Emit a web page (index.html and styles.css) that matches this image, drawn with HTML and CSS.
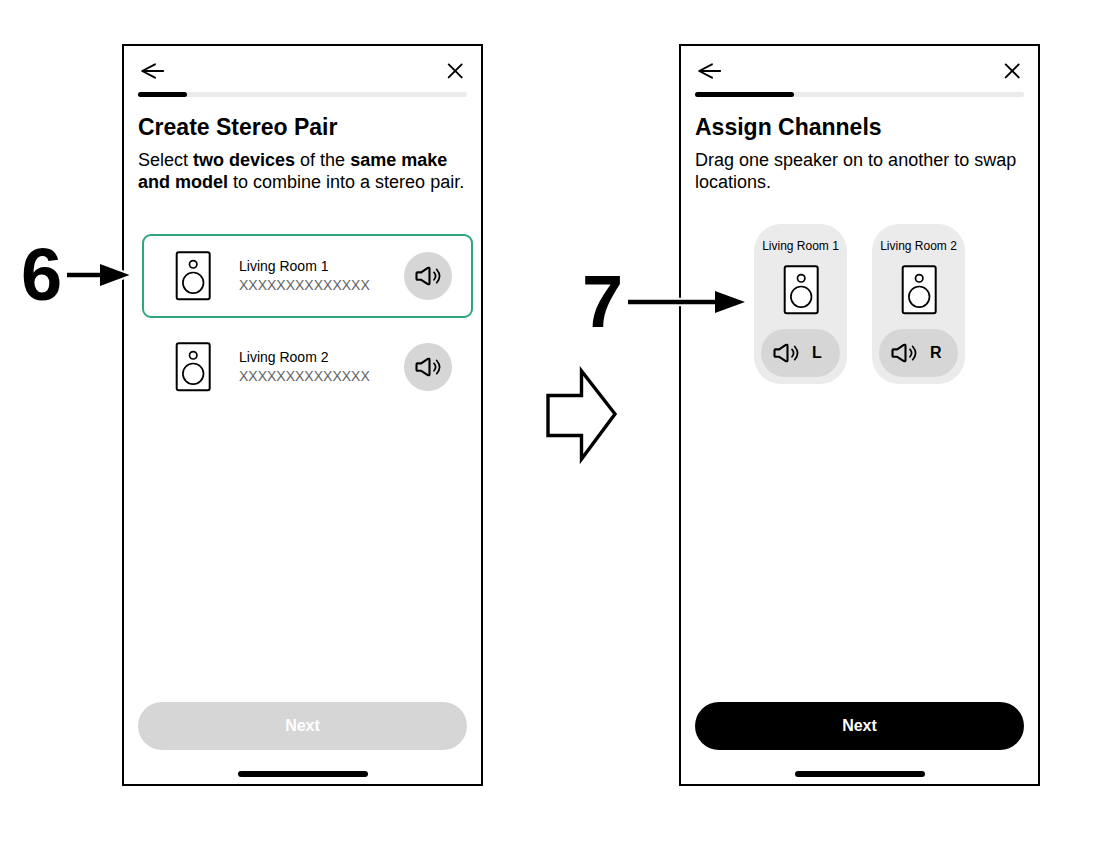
FILE: index.html
```html
<!DOCTYPE html>
<html lang="en">
<head>
<meta charset="utf-8">
<meta name="viewport" content="width=device-width, initial-scale=1">
<title>Stereo pair setup</title>
<link rel="stylesheet" href="styles.css">
</head>
<body>
<svg class="sprite" aria-hidden="true">
  <symbol id="back" viewBox="0 0 28 24">
    <path d="M25.200 12H5M17 5.300L4.200 12L17 18.700" fill="none" stroke="currentColor" stroke-width="1.900" stroke-linecap="round" stroke-linejoin="round"/>
  </symbol>
  <symbol id="close" viewBox="0 0 24 24">
    <path d="M5.700 5.400L18.700 18.400M18.700 5.400L5.700 18.400" fill="none" stroke="currentColor" stroke-width="1.900" stroke-linecap="round"/>
  </symbol>
  <symbol id="speaker" viewBox="0 0 36 50">
    <rect x="1.700" y="1.300" width="33" height="47" rx="2" fill="#fff" stroke="currentColor" stroke-width="2"/>
    <circle cx="18.200" cy="13.300" r="3.700" fill="none" stroke="currentColor" stroke-width="1.700"/>
    <circle cx="18.200" cy="31.800" r="10.300" fill="none" stroke="currentColor" stroke-width="1.700"/>
  </symbol>
  <symbol id="volume" viewBox="0 0 28 22">
    <g fill="none" stroke="currentColor" stroke-linecap="round" stroke-linejoin="round">
      <path d="M3.500 7.400H7.200L13.800 2.900Q15.500 2.200 15.500 3.800V18.200Q15.500 19.800 13.800 19.100L7.200 14.800H3.500Q2.500 14.800 2.500 13.800V8.400Q2.500 7.400 3.500 7.400Z" stroke-width="2.100"/>
      <path d="M20 7.400Q23.200 11.100 20 14.800M22.700 4.500Q28.500 11.100 22.700 17.700" stroke-width="1.700"/>
    </g>
  </symbol>
</svg>

<main class="guide">
  <section class="step">
    <div class="phone">
      <header class="bar">
        <button class="icon-button" type="button" aria-label="Back"><svg class="icon-back"><use href="#back"/></svg></button>
        <button class="icon-button" type="button" aria-label="Close"><svg class="icon-close"><use href="#close"/></svg></button>
      </header>
      <div class="progress" role="progressbar" aria-label="Setup progress" aria-valuenow="15"><div class="progress-fill" style="width:15%"></div></div>
      <h1 class="title">Create Stereo Pair</h1>
      <p class="text">Select <b>two devices</b> of the <b>same make and model</b> to combine into a stereo pair.</p>
      <ul class="devices">
        <li class="device device-selected">
          <input class="device-check" type="checkbox" id="room1" checked>
          <label class="device-label" for="room1">
            <svg class="icon-speaker"><use href="#speaker"/></svg>
            <span class="device-text"><span>Living Room 1</span><span class="serial">XXXXXXXXXXXXXX</span></span>
          </label>
          <button class="sound" type="button" aria-label="Play sound on Living Room 1"><svg class="icon-volume"><use href="#volume"/></svg></button>
        </li>
        <li class="device">
          <input class="device-check" type="checkbox" id="room2">
          <label class="device-label" for="room2">
            <svg class="icon-speaker"><use href="#speaker"/></svg>
            <span class="device-text"><span>Living Room 2</span><span class="serial">XXXXXXXXXXXXXX</span></span>
          </label>
          <button class="sound" type="button" aria-label="Play sound on Living Room 2"><svg class="icon-volume"><use href="#volume"/></svg></button>
        </li>
      </ul>
      <footer class="foot">
        <button class="next" type="button" disabled>Next</button>
        <div class="home"></div>
      </footer>
    </div>
    <div class="callout callout-six">
      <span>6</span>
      <svg width="66" height="28" viewBox="0 0 66 28" aria-hidden="true"><path d="M1 11.700H34V3L63.500 14L34 25V16.300H1Z" fill="#000" stroke="#fff" stroke-width="4" paint-order="stroke"/></svg>
    </div>
  </section>

  <svg class="block-arrow" width="74" height="102" viewBox="0 0 74 102" aria-hidden="true"><path d="M4 31.500H37.500V7L71 50L37.500 95V71.500H4Z" fill="#fff" stroke="#000" stroke-width="3.400"/></svg>

  <section class="step">
    <div class="phone">
      <header class="bar">
        <button class="icon-button" type="button" aria-label="Back"><svg class="icon-back"><use href="#back"/></svg></button>
        <button class="icon-button" type="button" aria-label="Close"><svg class="icon-close"><use href="#close"/></svg></button>
      </header>
      <div class="progress" role="progressbar" aria-label="Setup progress" aria-valuenow="30"><div class="progress-fill" style="width:30%"></div></div>
      <h1 class="title">Assign Channels</h1>
      <p class="text">Drag one speaker on to another to swap locations.</p>
      <div class="channels">
        <div class="channel">
          <span class="channel-name">Living Room 1</span>
          <svg class="icon-speaker"><use href="#speaker"/></svg>
          <button class="pill" type="button"><svg class="icon-volume"><use href="#volume"/></svg>L</button>
        </div>
        <div class="channel">
          <span class="channel-name">Living Room 2</span>
          <svg class="icon-speaker"><use href="#speaker"/></svg>
          <button class="pill" type="button"><svg class="icon-volume"><use href="#volume"/></svg>R</button>
        </div>
      </div>
      <footer class="foot">
        <button class="next" type="button">Next</button>
        <div class="home"></div>
      </footer>
    </div>
    <div class="callout callout-seven">
      <span>7</span>
      <svg width="122" height="28" viewBox="0 0 122 28" aria-hidden="true"><path d="M1 11.700H88V3L118 14L88 25V16.300H1Z" fill="#000" stroke="#fff" stroke-width="4" paint-order="stroke"/></svg>
    </div>
  </section>
</main>
</body>
</html>
```

FILE: styles.css
```css
* {
  box-sizing: border-box;
}

body {
  margin: 0;
  background: #fff;
  color: #000;
  font-family: "Liberation Sans", Arial, Helvetica, sans-serif;
}

button {
  padding: 0;
  border: 0;
  background: none;
  color: inherit;
  font: inherit;
}

svg {
  display: block;
  flex: none;
}

.sprite {
  position: absolute;
  width: 0;
  height: 0;
}

.guide {
  display: grid;
  grid-template-columns: 361fr 196fr 361fr;
  min-height: 100vh;
  padding: 44px 78px 76px 122px;
}

.step {
  position: relative;
  display: grid;
}

.phone {
  display: flex;
  flex-direction: column;
  padding: 13px 14px 7px;
  border: 2px solid #000;
}

.bar {
  display: flex;
  justify-content: space-between;
  margin-bottom: 9px;
}

.icon-back {
  width: 28px;
  height: 24px;
}

.icon-close {
  width: 24px;
  height: 24px;
}

.progress {
  height: 5px;
  border-radius: 3px;
  background: #ebebeb;
}

.progress-fill {
  height: 100%;
  border-radius: 3px;
  background: #000;
}

.title {
  margin: 16px 0 8px;
  font-size: 23px;
  line-height: 28px;
}

.text {
  margin: 0;
  font-size: 18px;
  line-height: 22px;
}

.devices {
  display: grid;
  gap: 7px;
  margin: 41px -6px 0 4px;
  padding: 0;
  list-style: none;
}

.device {
  position: relative;
  display: flex;
  align-items: center;
  justify-content: space-between;
  padding: 15px 19px 15px 31px;
  border: 2px solid transparent;
  border-radius: 9px;
}

.device-selected {
  border-color: #2fa57b;
}

.device-check {
  position: absolute;
  inset: 0;
  margin: 0;
  opacity: 0;
}

.device-label {
  display: flex;
  align-items: center;
  gap: 28px;
}

.device-text {
  display: grid;
  font-size: 14px;
  line-height: 19px;
}

.serial {
  color: #636366;
}

.icon-speaker {
  width: 36px;
  height: 50px;
}

.icon-volume {
  width: 28px;
  height: 22px;
}

.sound {
  display: grid;
  place-items: center;
  width: 48px;
  height: 48px;
  border-radius: 50%;
  background: #d6d6d6;
}

.channels {
  display: flex;
  justify-content: center;
  gap: 25px;
  margin-top: 31px;
}

.channel {
  display: flex;
  flex-direction: column;
  align-items: center;
  width: 93px;
  padding: 13px 7px 7px;
  border-radius: 27px;
  background: #ebebeb;
}

.channel-name {
  margin-bottom: 10px;
  font-size: 12px;
  line-height: 18px;
  white-space: nowrap;
}

.pill {
  display: flex;
  align-items: center;
  gap: 12px;
  width: 100%;
  height: 48px;
  margin-top: 14px;
  padding-left: 11px;
  border-radius: 24px;
  background: #d6d6d6;
  font-size: 16px;
  font-weight: bold;
}

.foot {
  display: grid;
  justify-items: center;
  gap: 21px;
  margin-top: auto;
}

.next {
  width: 100%;
  height: 48px;
  border-radius: 24px;
  background: #000;
  color: #fff;
  font-size: 16px;
  font-weight: bold;
}

.next:disabled {
  background: #d6d6d6;
}

.home {
  width: 130px;
  height: 6px;
  border-radius: 3px;
  background: #000;
}

.block-arrow {
  place-self: center;
}

/* Step numbers with arrows that cross the phone outline */
.callout {
  position: absolute;
  display: flex;
  align-items: center;
  gap: 4px;
  font-size: 74px;
  font-weight: bold;
  line-height: 56px;
}

.callout-six {
  top: 203px;
  left: -101px;
}

.callout-seven {
  top: 230px;
  left: -97px;
}
```
